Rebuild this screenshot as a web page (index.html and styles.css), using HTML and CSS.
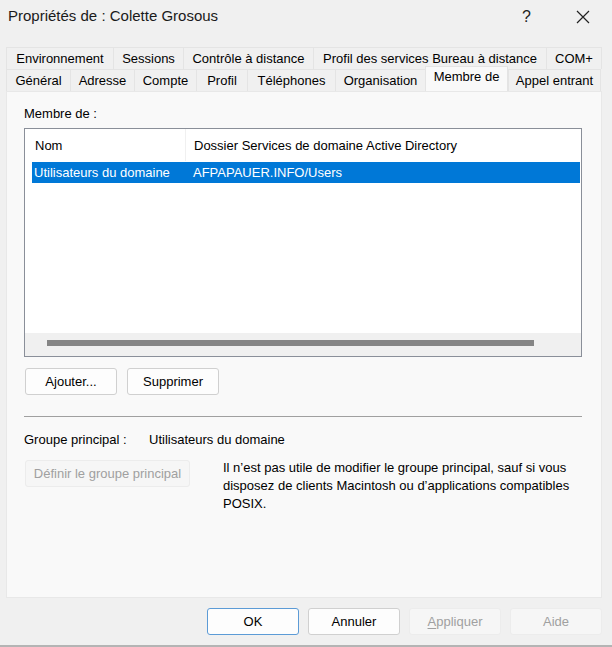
FILE: index.html
```html
<!DOCTYPE html>
<html lang="fr">
<head>
<meta charset="utf-8">
<title>Propriétés de : Colette Grosous</title>
<link rel="stylesheet" href="styles.css">
</head>
<body>
<div class="dialog">
  <div class="titlebar">
    <span class="title">Propriétés de : Colette Grosous</span>
    <span class="help">?</span>
    <span class="close">
      <svg width="14" height="14" viewBox="0 0 14 14"><path d="M1 1 L13 13 M13 1 L1 13" stroke="#222" stroke-width="1.2" fill="none"/></svg>
    </span>
  </div>
  <div class="tabs">
    <div class="tabrow row1">
      <div class="tab w-env">Environnement</div>
      <div class="tab w-ses">Sessions</div>
      <div class="tab w-ctl">Contrôle à distance</div>
      <div class="tab w-prs">Profil des services Bureau à distance</div>
      <div class="tab w-com">COM+</div>
    </div>
    <div class="tabrow row2">
      <div class="tab w-gen">Général</div>
      <div class="tab w-adr">Adresse</div>
      <div class="tab w-cpt">Compte</div>
      <div class="tab w-pro">Profil</div>
      <div class="tab w-tel">Téléphones</div>
      <div class="tab w-org">Organisation</div>
      <div class="tab w-mem active">Membre de</div>
      <div class="tab w-app">Appel entrant</div>
    </div>
  </div>
  <div class="panel">
    <div class="label">Membre de :</div>
    <div class="listbox">
      <div class="lhead">
        <div class="col c1">Nom</div>
        <div class="col c2">Dossier Services de domaine Active Directory</div>
      </div>
      <div class="lrow selected">
        <div class="col c1">Utilisateurs du domaine</div>
        <div class="col c2">AFPAPAUER.INFO/Users</div>
      </div>
      <div class="lspace"></div>
      <div class="hscroll"><div class="thumb"></div></div>
    </div>
    <div class="btnrow">
      <button class="btn">Ajouter...</button>
      <button class="btn">Supprimer</button>
    </div>
    <div class="sep"></div>
    <div class="primary">
      <span class="plabel">Groupe principal :</span>
      <span>Utilisateurs du domaine</span>
    </div>
    <div class="setrow">
      <button class="btn wide disabled">Définir le groupe principal</button>
      <p class="note">Il n’est pas utile de modifier le groupe principal, sauf si vous disposez de clients Macintosh ou d’applications compatibles POSIX.</p>
    </div>
  </div>
  <div class="footer">
    <button class="btn fbtn default">OK</button>
    <button class="btn fbtn">Annuler</button>
    <button class="btn fbtn disabled"><u>A</u>ppliquer</button>
    <button class="btn fbtn disabled">Aide</button>
  </div>
</div>
</body>
</html>
```

FILE: styles.css
```css
* { box-sizing: border-box; }
html, body { margin: 0; padding: 0; }
body {
  width: 612px;
  height: 647px;
  background: #f0f0f0;
  font-family: "Liberation Sans", Arial, sans-serif;
  font-size: 13px;
  color: #000;
  overflow: hidden;
}
.dialog {
  width: 612px;
  height: 647px;
  display: flex;
  flex-direction: column;
  border-bottom: 2px solid #b4b4b4;
}
.titlebar {
  height: 33px;
  display: flex;
  align-items: center;
  padding-left: 8px;
}
.title { font-size: 15px; color: #1a1a1a; flex: 1; padding-bottom: 2px; }
.help { font-size: 16px; width: 52px; text-align: left; color: #222; }
.close { width: 38px; display: flex; justify-content: flex-start; padding-left: 2px; }

.tabs { margin-top: 14px; padding-left: 6px; }
.tabrow { display: flex; height: 22px; }
.row2 { height: 22px; }
.tab {
  height: 22px;
  line-height: 21px;
  text-align: center;
  background: #f0f0f0;
  border-top: 1px solid #e4e4e4;
  border-left: 1px solid #e4e4e4;
  white-space: nowrap;
  color: #000;
}
.row1 .tab { line-height: 22px; }
.w-env { width: 107px; }
.w-ses { width: 70px; }
.w-ctl { width: 130px; }
.w-prs { width: 233px; }
.w-com { width: 56px; border-right: 1px solid #e4e4e4; }
.w-gen { width: 64px; }
.w-adr { width: 64px; }
.w-cpt { width: 62px; }
.w-pro { width: 51px; }
.w-tel { width: 88px; }
.w-org { width: 90px; }
.w-mem { width: 83px; }
.w-app { width: 93px; border-right: 1px solid #e4e4e4; }
.tab.active {
  background: #f9f9f9;
  height: 25px;
  margin-top: -3px;
  line-height: 20px;
  position: relative;
  z-index: 1;
  border-right: 1px solid #e4e4e4;
}

.panel {
  margin: 0 10px 0 6px;
  height: 507px;
  background: #f9f9f9;
  border: 1px solid #e8e8e8;
  padding: 13px 19px 0 17px;
}
.label { height: 23px; line-height: 18px; }
.listbox {
  height: 229px;
  border: 1px solid #8a8f99;
  background: #fff;
  display: flex;
  flex-direction: column;
}
.lhead { display: flex; height: 32px; align-items: center; }
.lhead .c1 { border-right: 1px solid #f0f0f0; height: 100%; display: flex; align-items: center; }
.col { white-space: nowrap; }
.c1 { width: 161px; padding-left: 10px; }
.c2 { padding-left: 8px; }
.lrow { display: flex; height: 21px; align-items: center; margin: 1px 1px 0 7px; }
.lrow .c1 { padding-left: 2px; width: 153px; }
.selected { background: #0078d7; color: #fff; }
.lspace { flex: 1; }
.hscroll {
  height: 23px;
  background: #f0f0f0;
  display: flex;
  align-items: flex-start;
  padding: 7px 0 0 22px;
}
.thumb { width: 487px; height: 6px; background: #858585; }

.btnrow { display: flex; gap: 10px; margin-top: 11px; padding-left: 1px; }
.btn {
  font-family: "Liberation Sans", Arial, sans-serif;
  font-size: 13px;
  color: #000;
  background: #fdfdfd;
  border: 1px solid #d0d0d0;
  border-radius: 3px;
  height: 27px;
  width: 92px;
  padding: 0;
}
.btn.disabled { color: #a0a0a0; background: #f6f6f6; border-color: #ececec; }
.sep { height: 1px; background: #a0a0a0; margin-top: 21px; }
.primary { margin-top: 15px; display: flex; height: 16px; line-height: 16px; }
.plabel { width: 125px; }
.setrow { display: flex; margin-top: 12px; }
.btn.wide { width: 165px; height: 27px; margin-left: 1px; flex: none; }
.note { margin: -1px 0 0 33px; line-height: 18px; width: 360px; padding-top: 0; }

.footer {
  display: flex;
  justify-content: flex-end;
  gap: 9px;
  padding: 10px 10px 0 0;
}
.fbtn { width: 92px; height: 27px; }
.fbtn.default { border-color: #5c9bd6; }
.fbtn u { text-decoration: underline; text-underline-offset: 2px; }
```
